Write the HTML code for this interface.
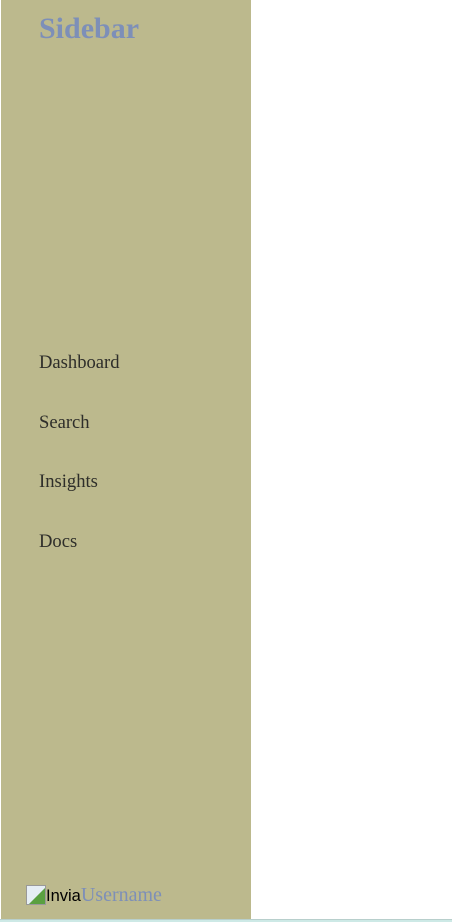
<!DOCTYPE html>
<html><head><meta charset="utf-8"><style>
html,body{margin:0;padding:0;width:452px;height:922px;overflow:hidden;background:#fff;}
.sb{position:absolute;left:1px;top:0;width:250px;height:919px;background:#bcb98d;font-family:"Liberation Serif",serif;}
.bot{position:absolute;left:0;top:919px;width:452px;height:3px;background:#cde9e6;border-top:1px solid #b8cfcc;box-sizing:border-box;}
h1{position:absolute;left:38px;top:11px;margin:0;font-size:30px;line-height:36px;font-weight:bold;color:#7d8fb8;}
.nav{position:absolute;left:38px;font-size:18.6px;color:#2e2e2a;line-height:22px;}
.user{position:absolute;left:25px;top:884px;font-size:19px;line-height:22px;white-space:nowrap;}
.img{display:inline-block;width:20px;height:20px;vertical-align:-4px;background:linear-gradient(135deg,#e6eef5 55%,#5aa040 56%);border:1px solid #999;box-sizing:border-box;}
</style></head><body>
<div class="sb">
<h1>Sidebar</h1>
<div class="nav" style="top:352px">Dashboard</div>
<div class="nav" style="top:412px">Search</div>
<div class="nav" style="top:471px">Insights</div>
<div class="nav" style="top:531px">Docs</div>
<div class="user"><span class="img"></span><span style="font-family:'Liberation Sans',sans-serif;font-size:16.5px;color:#000">Invia</span><span style="color:#7d8fb8;font-size:20px">Username</span></div>
</div>
<div class="bot"></div>
</body></html>
